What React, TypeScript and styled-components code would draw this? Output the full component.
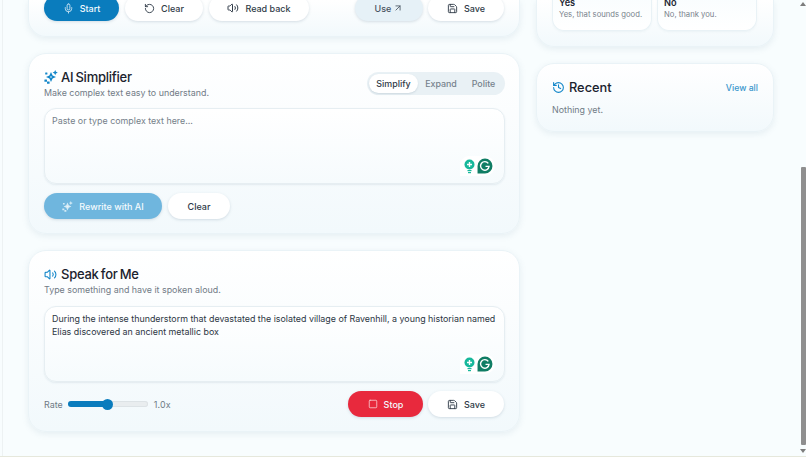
import styled, { createGlobalStyle } from "styled-components";
import { ArrowUpRight, History, Mic, RotateCcw, Save, Square, Volume2 } from "lucide-react";

const GlobalStyle = createGlobalStyle`
  html, body {
    margin: 0;
    padding: 0;
    height: 100%;
    overflow: hidden;
    background: #f8fdfe;
    font-family: Inter, "Liberation Sans", sans-serif;
  }
  * { box-sizing: border-box; }
`;

const Page = styled.div`
  position: relative;
  width: 806px;
  height: 457px;
  overflow: hidden;
  padding: 0 32px 0 28px;
  display: grid;
  grid-template-columns: 492px 238px;
  column-gap: 16px;
  align-items: start;
  background: #f8fdfe;
  border-bottom: 1px solid #e6e8dc;
`;

const Column = styled.div`
  display: flex;
  flex-direction: column;
  gap: 16px;
`;

const Card = styled.section`
  border-radius: 18px;
  border: 1px solid #eaf3f7;
  background: linear-gradient(180deg, #ffffff 0%, #f2f9fc 100%);
  box-shadow: 0 2px 6px rgba(120, 150, 170, 0.14);
  padding: 15px 15px 14px;
`;

const CutCard = styled(Card)<{ $height: number }>`
  height: ${(p) => p.$height}px;
  border-top: 0;
  border-top-left-radius: 0;
  border-top-right-radius: 0;
  padding: 0 15px;
`;

const ActionBar = styled.div`
  display: flex;
  align-items: center;
  gap: 6px;
  margin-top: -5px;
`;

const Spacer = styled.div`
  flex: 1;
`;

const RightActions = styled.div`
  display: flex;
  align-items: center;
  gap: 5px;
`;

const Pill = styled.button<{ $width: number; $tone?: "primary" | "soft" | "stop" | "faded" }>`
  width: ${(p) => p.$width}px;
  height: 26px;
  flex: none;
  border: 0;
  padding: 0;
  border-radius: 13px;
  display: flex;
  align-items: center;
  justify-content: center;
  gap: 6px;
  font: 500 9px Inter, "Liberation Sans", sans-serif;
  color: ${(p) => (p.$tone === "primary" || p.$tone === "stop" || p.$tone === "faded" ? "#f3fafd" : p.$tone === "soft" ? "#46525f" : "#303b48")};
  background: ${(p) =>
    p.$tone === "primary"
      ? "#0a7cbd"
      : p.$tone === "stop"
        ? "#e8293d"
        : p.$tone === "faded"
          ? "#6fb6de"
          : p.$tone === "soft"
            ? "#e6f1f7"
            : "#ffffff"};
  box-shadow: 0 1px 3px rgba(90, 120, 140, 0.22);
`;

const CardHead = styled.div`
  display: flex;
  align-items: flex-start;
  justify-content: space-between;
  margin-bottom: -1px;
`;

const TitleRow = styled.div`
  display: flex;
  align-items: center;
  gap: 4px;
  height: 16px;
`;

const SparkTitleRow = styled(TitleRow)`
  gap: 3px;
`;

const Title = styled.h2`
  margin: 0;
  font: 500 13px Inter, "Liberation Sans", sans-serif;
  letter-spacing: -0.25px;
  word-spacing: -1px;
  color: #1a222d;
`;

const Subtitle = styled.p`
  margin: 2px 0 0;
  font: 400 8.9px/12px Inter, "Liberation Sans", sans-serif;
  color: #717b86;
`;

const Tabs = styled.div`
  display: flex;
  align-items: center;
  height: 23px;
  padding: 2px;
  margin: 3px -1px 0 0;
  border-radius: 12px;
  background: #e9f1f5;
`;

const Tab = styled.span<{ $active?: boolean; $width: number }>`
  width: ${(p) => p.$width}px;
  height: 19px;
  border-radius: 10px;
  display: flex;
  align-items: center;
  justify-content: center;
  font: 500 8.9px Inter, "Liberation Sans", sans-serif;
  color: ${(p) => (p.$active ? "#2e3946" : "#76818c")};
  background: ${(p) => (p.$active ? "#ffffff" : "transparent")};
  box-shadow: ${(p) => (p.$active ? "0 1px 2px rgba(90, 120, 140, 0.2)" : "none")};
`;

const TextBox = styled.div<{ $filled?: boolean }>`
  position: relative;
  margin: 10px -1px 0 0;
  height: 76px;
  border-radius: 12px;
  border: 1px solid #e6eef2;
  background: linear-gradient(180deg, #ffffff 0%, #f6fbfd 100%);
  box-shadow: 0 1px 2px rgba(120, 150, 170, 0.16);
  padding: 5px 4px 5px 7px;
  font: 400 8.9px/13px Inter, "Liberation Sans", sans-serif;
  color: ${(p) => (p.$filled ? "#2c3643" : "#757f8a")};
`;

const GrammarBadge = styled.div`
  position: absolute;
  right: 9px;
  bottom: 7px;
  width: 35px;
  height: 20px;
  border-radius: 9px 10px 10px 0;
  background: #ffffff;
  display: flex;
  align-items: center;
  justify-content: space-between;
  padding: 0 2px 0 4px;
`;

const Footer = styled.div`
  display: flex;
  align-items: center;
  gap: 6px;
  margin-top: 9px;
`;

const RateLabel = styled.span`
  font: 400 8.9px Inter, "Liberation Sans", sans-serif;
  color: #6f7a85;
  margin-right: -1px;
`;

const Track = styled.div`
  position: relative;
  width: 80px;
  height: 6px;
  border-radius: 3px;
  background: #e9edef;
  box-shadow: inset 0 0 0 1px #dde3e6;
`;

const TrackFill = styled.div`
  height: 100%;
  border-radius: 3px;
  background: #0a7cbd;
`;

const Thumb = styled.div`
  position: absolute;
  top: -2.5px;
  width: 11px;
  height: 11px;
  margin-left: -5.5px;
  border-radius: 50%;
  background: #0a7cbd;
`;

const RateValue = styled.span`
  font: 400 8.9px Inter, "Liberation Sans", sans-serif;
  letter-spacing: 0.2px;
  color: #6f7a85;
`;

const PhraseGrid = styled.div`
  display: grid;
  grid-template-columns: 100px 100px;
  gap: 5px;
  margin-top: -3px;
`;

const Phrase = styled.div`
  height: 34px;
  padding: 0 6px;
  border: 1px solid #e9f2f6;
  border-top: 0;
  border-radius: 0 0 12px 12px;
  background: linear-gradient(180deg, #f9fdfe 0%, #ffffff 100%);
  box-shadow: 0 1px 2px rgba(120, 150, 170, 0.08);
`;

const PhraseTitle = styled.div`
  font: 600 9.2px/11px Inter, "Liberation Sans", sans-serif;
  color: #1e2733;
`;

const PhraseText = styled.div`
  margin-top: 1px;
  font: 400 7.7px/11px Inter, "Liberation Sans", sans-serif;
  white-space: nowrap;
  color: #79838d;
`;

const RecentCard = styled(Card)`
  height: 69px;
`;

const RecentHead = styled.div`
  display: flex;
  align-items: center;
  justify-content: space-between;
  height: 17px;
`;

const ViewAll = styled.a`
  font: 500 8.7px Inter, "Liberation Sans", sans-serif;
  color: #3b97cd;
`;

const Muted = styled.p`
  margin: 8px 0 0;
  font: 400 8.9px/12px Inter, "Liberation Sans", sans-serif;
  color: #717b86;
`;

const RecentTitle = styled(Title)`
  font-size: 12.8px;
  letter-spacing: 0;
`;

const Scrollbar = styled.div`
  position: absolute;
  top: 0;
  right: 0;
  bottom: 0;
  width: 6px;
  display: flex;
  flex-direction: column;
  align-items: center;
  justify-content: space-between;
  padding-top: 2px;
`;

const ScrollThumb = styled.div`
  position: absolute;
  top: 167px;
  left: 1px;
  width: 5px;
  height: 278px;
  border-radius: 1px;
  background: #8f8f8f;
`;

const ScrollArrow = styled.div<{ $down?: boolean }>`
  width: 0;
  height: 0;
  margin-bottom: ${(p) => (p.$down ? "3px" : "0")};
  border-left: 3px solid transparent;
  border-right: 3px solid transparent;
  ${(p) => (p.$down ? "border-top: 4px solid #7d7d7d;" : "border-bottom: 4px solid #7d7d7d;")}
`;

const EdgeLine = styled.div`
  position: absolute;
  top: 0;
  bottom: 0;
  left: 2px;
  width: 1px;
  background: #edf2f3;
`;

function SparkIcon({ color = "#1487c9", size = 14 }: { color?: string; size?: number }) {
  return (
    <svg width={size} height={size} viewBox="0 0 14 14" fill={color}>
      <path d="M7 2 8.6 5.4 12 7 8.6 8.6 7 12 5.4 8.6 2 7 5.4 5.4Z" />
      <path d="M11.2 0 12 1.8 13.8 2.6 12 3.4 11.2 5.2 10.4 3.4 8.6 2.6 10.4 1.8Z" />
      <rect x="0.4" y="9.4" width="2.6" height="2.4" rx="0.4" />
      <rect x="3" y="11.4" width="2.6" height="2.4" rx="0.4" />
      <rect x="1.2" y="2.4" width="2.2" height="2.2" rx="0.4" />
      <circle cx="7" cy="7" r="1.1" fill="#ffffff" fillOpacity="0.55" />
    </svg>
  );
}

function GrammarIcons() {
  return (
    <GrammarBadge>
      <svg width="11" height="15" viewBox="0 0 11 15">
        <circle cx="5.5" cy="5.5" r="5" fill="#17b89b" />
        <path d="M5.5 3v5M3 5.5h5" stroke="#fff" strokeWidth="1.4" />
        <rect x="3.5" y="11" width="4" height="1.2" fill="#17b89b" />
        <rect x="4" y="13" width="3" height="1.2" fill="#17b89b" />
      </svg>
      <svg width="16" height="16" viewBox="0 0 15 15">
        <path d="M7.5.5a7 7 0 1 1 0 14H.5V7.5a7 7 0 0 1 7-7Z" fill="#0f7d64" />
        <path d="M10.6 5.1a4 4 0 1 0 .7 2.8H8" fill="none" stroke="#fff" strokeWidth="1.3" />
      </svg>
    </GrammarBadge>
  );
}

export default function App() {
  return (
    <>
      <GlobalStyle />
      <Page>
        <EdgeLine />
        <Column>
          <CutCard $height={37}>
            <ActionBar>
              <Pill $width={75} $tone="primary">
                <Mic size={11} color="#cfe6f4" />
                Start
              </Pill>
              <Pill $width={78}>
                <RotateCcw size={11} />
                Clear
              </Pill>
              <Pill $width={100}>
                <Volume2 size={12} />
                Read back
              </Pill>
              <Spacer />
              <RightActions>
                <Pill $width={68} $tone="soft">
                  Use
                  <ArrowUpRight size={10} style={{ marginLeft: -4 }} />
                </Pill>
                <Pill $width={76}>
                  <Save size={11} />
                  Save
                </Pill>
              </RightActions>
            </ActionBar>
          </CutCard>

          <Card>
            <CardHead>
              <div>
                <SparkTitleRow>
                  <SparkIcon />
                  <Title>AI Simplifier</Title>
                </SparkTitleRow>
                <Subtitle>Make complex text easy to understand.</Subtitle>
              </div>
              <Tabs>
                <Tab $active $width={49}>
                  Simplify
                </Tab>
                <Tab $width={46}>Expand</Tab>
                <Tab $width={39}>Polite</Tab>
              </Tabs>
            </CardHead>
            <TextBox>
              Paste or type complex text here...
              <GrammarIcons />
            </TextBox>
            <Footer>
              <Pill $width={118} $tone="faded">
                <SparkIcon color="#d5ebf6" size={11} />
                Rewrite with AI
              </Pill>
              <Pill $width={62}>Clear</Pill>
            </Footer>
          </Card>

          <Card>
            <TitleRow>
              <Volume2 size={13} color="#1487c9" />
              <Title>Speak for Me</Title>
            </TitleRow>
            <Subtitle>Type something and have it spoken aloud.</Subtitle>
            <TextBox $filled>
              During the intense thunderstorm that devastated the isolated village of Ravenhill, a young historian named
              Elias discovered an ancient metallic box
              <GrammarIcons />
            </TextBox>
            <Footer>
              <RateLabel>Rate</RateLabel>
              <Track>
                <TrackFill style={{ width: "50%" }} />
                <Thumb style={{ left: "50%" }} />
              </Track>
              <RateValue>1.0x</RateValue>
              <Spacer />
              <RightActions>
                <Pill $width={75} $tone="stop">
                  <Square size={10} color="#f8c9ce" />
                  Stop
                </Pill>
                <Pill $width={76}>
                  <Save size={11} />
                  Save
                </Pill>
              </RightActions>
            </Footer>
          </Card>
        </Column>

        <Column>
          <CutCard $height={47}>
            <PhraseGrid>
              <Phrase>
                <PhraseTitle>Yes</PhraseTitle>
                <PhraseText>Yes, that sounds good.</PhraseText>
              </Phrase>
              <Phrase>
                <PhraseTitle>No</PhraseTitle>
                <PhraseText>No, thank you.</PhraseText>
              </Phrase>
            </PhraseGrid>
          </CutCard>
          <RecentCard>
            <RecentHead>
              <TitleRow>
                <History size={13} color="#1487c9" />
                <RecentTitle>Recent</RecentTitle>
              </TitleRow>
              <ViewAll>View all</ViewAll>
            </RecentHead>
            <Muted>Nothing yet.</Muted>
          </RecentCard>
        </Column>

        <Scrollbar>
          <ScrollArrow />
          <ScrollThumb />
          <ScrollArrow $down />
        </Scrollbar>
      </Page>
    </>
  );
}
